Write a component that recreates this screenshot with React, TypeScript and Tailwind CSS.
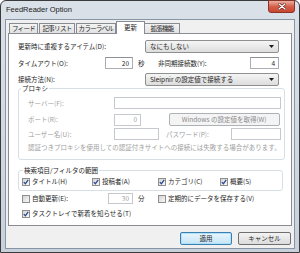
import React from "react";

const Sel = ({ text, className = "" }: { text: string; className?: string }) => (
  <div
    className={
      "flex h-[13px] items-center rounded-[2px] border border-[#8e8f8f] bg-gradient-to-b from-[#f5f5f5] to-[#dddddd] pl-[4px] pr-[4px] " +
      className
    }
  >
    <span className="flex-1 whitespace-nowrap leading-none">{text}</span>
    <svg width="5" height="3" viewBox="0 0 5 3">
      <path d="M0 0H5L2.5 3Z" fill="#1a1a1a" />
    </svg>
  </div>
);

const Inp = ({
  value = "",
  className = "",
  disabled = false,
}: {
  value?: string;
  className?: string;
  disabled?: boolean;
}) => (
  <div
    className={
      "flex items-center justify-end border bg-white pr-[3px] leading-none " +
      (disabled ? "border-[#c5c8cc] text-[#a0a0a0] " : "border-[#abadb3] border-t-[#8d9096] ") +
      className
    }
  >
    {value}
  </div>
);

const Chk = ({ checked }: { checked: boolean }) => (
  <div className="flex h-[8px] w-[8px] shrink-0 items-center justify-center border border-[#8f8f8f] bg-gradient-to-br from-[#d4d4d4] to-[#f8f8f8]">
    {checked && (
      <svg width="6" height="6" viewBox="0 0 6 6">
        <path d="M0.8 3.1 L2.4 4.8 L5.2 0.9" stroke="#2a4a8f" strokeWidth="1.3" fill="none" />
      </svg>
    )}
  </div>
);

const CL = ({ checked, label, className = "" }: { checked: boolean; label: string; className?: string }) => (
  <div className={"flex items-center gap-[2px] whitespace-nowrap " + className}>
    <Chk checked={checked} />
    <span className="leading-none">{label}</span>
  </div>
);

const tabCls =
  "flex h-[10px] items-center justify-center whitespace-nowrap border border-b-0 border-[#898c95] bg-gradient-to-b from-[#f3f3f3] to-[#e2e2e2] leading-none tracking-[-0.7px]";

export default function App() {
  return (
    <div className="flex h-[253px] w-[300px] flex-col rounded-t-[6px] border border-[#3b3b3b] bg-gradient-to-b from-[#dae1e9] to-[#c8d1db] px-[4px] pb-[3px] font-['Noto_Sans_CJK_JP',sans-serif] text-[6.5px] text-[#1e1e1e]">
      {/* title bar */}
      <div className="flex h-[18px] items-start justify-between">
        <span className="pl-[1px] pt-[4px] font-['Liberation_Sans',sans-serif] text-[7.5px] leading-[9px] text-[#1b1b1b]">
          FeedReader Option
        </span>
        <div className="-mt-[1px] flex h-[13px] w-[27px] items-center justify-center rounded-b-[3px] border border-[#8a3328] bg-gradient-to-b from-[#eab0a2] via-[#d5604b] to-[#c8452f]">
          <svg width="8" height="7" viewBox="0 0 8 7">
            <path d="M1 1L7 6M7 1L1 6" stroke="#5a1a12" strokeWidth="2.6" strokeLinecap="round" />
            <path d="M1 1L7 6M7 1L1 6" stroke="#ffffff" strokeWidth="1.4" strokeLinecap="round" />
          </svg>
        </div>
      </div>

      {/* client */}
      <div className="flex h-[230px] flex-col border border-[#8795a5] bg-[#f0f0f0]">
        {/* tabs */}
        <div className="flex h-[13px] items-end">
          <div className={"ml-[3px] w-[29px] " + tabCls}>フィード</div>
          <div className={"ml-[1px] w-[36px] " + tabCls}>記事リスト</div>
          <div className={"ml-[1px] w-[40px] " + tabCls}>カラーラベル</div>
          <div className="relative z-10 -mb-[1px] flex h-[13px] w-[29px] items-center justify-center whitespace-nowrap border border-b-0 border-[#898c95] bg-white pb-[1px] leading-none">
            更新
          </div>
          <div className={"w-[35px] border-l-0 " + tabCls}>拡張機能</div>
        </div>

        {/* panel */}
        <div className="mx-[2px] flex h-[193px] flex-col border border-[#898c95] bg-white pl-[9px] pr-[8px] pt-[6px]">
          <div className="flex h-[13px] items-center">
            <span className="leading-none">更新時に重複するアイテム(D):</span>
            <Sel text="なにもしない" className="ml-auto mr-[4px] w-[134px]" />
          </div>

          <div className="mt-[4px] flex h-[12px] items-center">
            <div className="flex w-[140px] items-center">
              <span className="w-[87px] leading-none">タイムアウト(O):</span>
              <Inp value="20" className="h-[12px] w-[28px]" />
              <span className="ml-[5px] leading-none">秒</span>
            </div>
            <span className="leading-none">非同期接続数(Y):</span>
            <Inp value="4" className="ml-auto mr-[4px] h-[12px] w-[29px]" />
          </div>

          <div className="mt-[4px] flex h-[13px] items-center">
            <span className="leading-none">接続方法(N):</span>
            <Sel text="Sleipnir の設定値で接続する" className="ml-auto mr-[4px] w-[134px]" />
          </div>

          <fieldset className="-mt-[2px] rounded-[3px] border border-[#d5dfe5] pb-[8px] pl-[9px] pr-[3px]">
            <legend className="-ml-[7px] px-[1px] leading-[8px]">プロキシ</legend>
            <div className="flex flex-col text-[#a0a0a0]">
              <div className="mt-[5px] flex h-[12px] items-center">
                <span className="w-[86px] leading-none">サーバー(F):</span>
                <Inp disabled className="h-[12px] flex-1" />
              </div>
              <div className="mt-[4px] flex h-[13px] items-center">
                <span className="w-[86px] leading-none">ポート(R):</span>
                <Inp disabled value="0" className="h-[12px] w-[27px]" />
                <div className="ml-auto mr-[1px] flex h-[13px] w-[111px] items-center justify-center rounded-[2px] border border-[#adb2b5] bg-[#f4f4f4] leading-none text-[#8a8a8a]">
                  Windows の設定値を取得(W)
                </div>
              </div>
              <div className="mt-[2px] flex h-[12px] items-center">
                <span className="w-[86px] leading-none">ユーザー名(U):</span>
                <Inp disabled className="h-[12px] w-[45px]" />
                <span className="ml-[7px] leading-none">パスワード(P):</span>
                <Inp disabled className="ml-auto h-[12px] w-[50px]" />
              </div>
              <div className="mt-[3px] flex h-[8px] items-center whitespace-nowrap leading-none">
                認証つきプロキシを使用しての認証付きサイトへの接続には失敗する場合があります。
              </div>
            </div>
          </fieldset>

          <fieldset className="mt-[6px] rounded-[3px] border border-[#d5dfe5] pb-[4px] pl-[3px] pr-[3px]">
            <legend className="ml-[1px] px-[1px] leading-[8px]">検索項目/フィルタの範囲</legend>
            <div className="mt-[3px] flex h-[9px] items-center">
              <CL checked label="タイトル(H)" className="w-[70px]" />
              <CL checked label="投稿者(A)" className="w-[66px]" />
              <CL checked label="カテゴリ(C)" className="w-[62px]" />
              <CL checked label="概要(S)" />
            </div>
          </fieldset>

          <div className="mt-[2px] flex h-[11px] items-center pl-[4px]">
            <div className="flex w-[136px] items-center">
              <CL checked={false} label="自動更新(E):" className="w-[86px]" />
              <Inp disabled value="30" className="h-[11px] w-[25px]" />
              <span className="ml-[5px] leading-none">分</span>
            </div>
            <CL checked={false} label="定期的にデータを保存する(V)" />
          </div>

          <div className="mt-[5px] flex h-[9px] items-center pl-[4px]">
            <CL checked label="タスクトレイで新着を知らせる(T)" />
          </div>
        </div>

        {/* buttons */}
        <div className="flex flex-1 items-start justify-end gap-[6px] pr-[3px] pt-[6px]">
          <div className="flex h-[13px] w-[52px] items-center justify-center rounded-[2px] border border-[#3c7fb1] bg-gradient-to-b from-[#eaf6fd] to-[#c4e5f6] leading-none shadow-[inset_0_0_0_1px_#aee0fa]">
            適用
          </div>
          <div className="flex h-[13px] w-[53px] items-center justify-center rounded-[2px] border border-[#707070] bg-gradient-to-b from-[#f3f3f3] to-[#dcdcdc] leading-none">
            キャンセル
          </div>
        </div>
      </div>
    </div>
  );
}
